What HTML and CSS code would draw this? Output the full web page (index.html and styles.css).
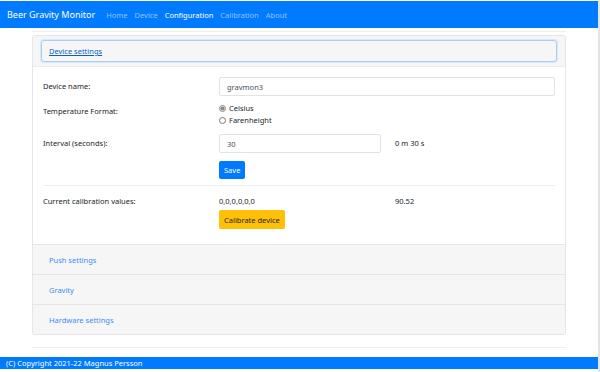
FILE: index.html
```html
<!DOCTYPE html>
<html lang="en">
<head>
  <meta charset="UTF-8">
  <meta name="viewport" content="width=device-width, initial-scale=1.0">
  <title>Beer Gravity Monitor</title>
  <link rel="stylesheet" href="styles.css">
</head>
<body>
<div class="page">

  <nav class="navbar">
    <span class="brand">Beer Gravity Monitor</span>
    <a class="nav-link" href="#">Home</a>
    <a class="nav-link" href="#">Device</a>
    <a class="nav-link active" href="#">Configuration</a>
    <a class="nav-link" href="#">Calibration</a>
    <a class="nav-link" href="#">About</a>
  </nav>

  <main class="container">
    <hr class="top-rule">

    <div class="accordion">
      <div class="card">
        <div class="card-header">
          <button class="header-btn focused" type="button">Device settings</button>
        </div>
        <div class="card-body">
          <form class="settings">
            <div class="row">
              <label class="col-label" for="mdns">Device name:</label>
              <input class="field wide" type="text" id="mdns" value="gravmon3">
            </div>

            <div class="row">
              <span class="col-label">Temperature Format:</span>
              <div class="radios">
                <label class="radio"><input type="radio" name="temp" checked> Celsius</label>
                <label class="radio"><input type="radio" name="temp"> Farenheight</label>
              </div>
            </div>

            <div class="row">
              <label class="col-label" for="interval">Interval (seconds):</label>
              <input class="field" type="text" id="interval" value="30">
              <span class="note">0 m 30 s</span>
            </div>

            <div class="row">
              <span class="col-label"></span>
              <button class="btn btn-primary" type="button">Save</button>
            </div>
          </form>

          <hr class="divider">

          <div class="row">
            <span class="col-label">Current calibration values:</span>
            <div class="stack">
              <span>0,0,0,0,0,0</span>
              <button class="btn btn-warning" type="button">Calibrate device</button>
            </div>
            <span class="note">90.52</span>
          </div>
        </div>
      </div>

      <div class="card">
        <div class="card-header"><button class="header-btn" type="button">Push settings</button></div>
      </div>
      <div class="card">
        <div class="card-header"><button class="header-btn" type="button">Gravity</button></div>
      </div>
      <div class="card">
        <div class="card-header"><button class="header-btn" type="button">Hardware settings</button></div>
      </div>
    </div>

    <hr class="bottom-rule">
  </main>

  <footer class="footer">(C) Copyright 2021-22 Magnus Persson</footer>
</div>
</body>
</html>
```

FILE: styles.css
```css
html, body {
  margin: 0;
  padding: 0;
  background-color: #fff;
}

body {
  font-family: 'Noto Sans', 'Open Sans', sans-serif;
  font-size: 7.5px;
  color: #212529;
}

.page {
  width: 598px;
  height: 372px;
  border-right: 2px solid #e4e4e4;
  display: flex;
  flex-direction: column;
}

.navbar {
  background-color: #007bff;
  height: 27px;
  margin-top: 1px;
  display: flex;
  align-items: center;
  padding: 0 7px;
  gap: 7px;
}

.brand {
  color: #fff;
  font-size: 9px;
  margin-right: 4px;
}

.nav-link {
  color: rgba(255, 255, 255, 0.55);
  text-decoration: none;
  font-size: 7.5px;
}

.nav-link.active {
  color: #fff;
}

.container {
  width: 534px;
  margin: 0 auto;
  flex: 1;
}

.top-rule, .bottom-rule {
  border: none;
  border-top: 1px solid #eeeeee;
  margin: 0;
}

.top-rule {
  margin-top: 3px;
  margin-bottom: 3px;
}

.bottom-rule {
  margin-top: 12px;
}

.accordion {
  border-radius: 3px;
  overflow: hidden;
}

.card {
  border: 1px solid #e6e6e6;
  border-top: none;
}

.card:first-child {
  border-top: 1px solid #e6e6e6;
}

.card-header {
  background-color: #f6f6f6;
  height: 30px;
  padding: 0 8px;
  display: flex;
  align-items: center;
  border-bottom: 1px solid #ececec;
}

.card:not(:first-child) .card-header {
  border-bottom: none;
  height: 29px;
}

.header-btn {
  font-family: inherit;
  font-size: 7.5px;
  background: none;
  border: 1px solid transparent;
  color: #3b8ff5;
  padding: 0 7px;
  height: 22px;
  width: 100%;
  text-align: left;
  border-radius: 3px;
}

.header-btn.focused {
  color: #0b5ec9;
  text-decoration: underline;
  border-color: #a8cdf6;
  box-shadow: 0 0 0 1px #d6e8fb;
}

.card-body {
  padding: 10px 10px 9px 10px;
  background: #fff;
}

.row {
  display: grid;
  grid-template-columns: 162px 162px 1fr;
  column-gap: 14px;
  align-items: start;
  margin-bottom: 6px;
}

.col-label {
  line-height: 19px;
}

.field {
  font-family: inherit;
  font-size: 7.5px;
  color: #495057;
  height: 19px;
  box-sizing: border-box;
  border: 1px solid #e2e2e2;
  border-radius: 2px;
  padding: 0 7px;
  margin: 0;
}

.field.wide {
  grid-column: 2 / 4;
}

.note {
  line-height: 19px;
}

.radios {
  display: flex;
  flex-direction: column;
  gap: 1px;
  margin-top: 1px;
  margin-bottom: 2px;
}

.radio {
  display: flex;
  align-items: center;
  gap: 3px;
  line-height: 11px;
}

.radio input {
  width: 7px;
  height: 7px;
  margin: 0;
  accent-color: #8a8a8a;
}

.btn {
  font-family: inherit;
  font-size: 7.5px;
  border: none;
  border-radius: 2px;
  cursor: pointer;
  height: 18px;
  padding: 0 5px;
  justify-self: start;
}

.settings .row:last-child {
  margin-top: 8px;
}

.btn-primary {
  background-color: #007bff;
  color: #fff;
}

.btn-warning {
  background-color: #ffc107;
  color: #212529;
  height: 19px;
}

.divider {
  border: none;
  border-top: 1px solid #eeeeee;
  margin: 4px 0 6px 0;
}

.stack {
  display: flex;
  flex-direction: column;
  align-items: flex-start;
  gap: 2px;
}

.stack span {
  line-height: 13px;
  margin-top: 3px;
}

.stack + .note {
  line-height: 13px;
  margin-top: 3px;
}

.footer {
  background-color: #007bff;
  color: #fff;
  height: 12px;
  line-height: 12px;
  padding-left: 6px;
  margin-bottom: 3px;
  font-size: 7.5px;
}
```
